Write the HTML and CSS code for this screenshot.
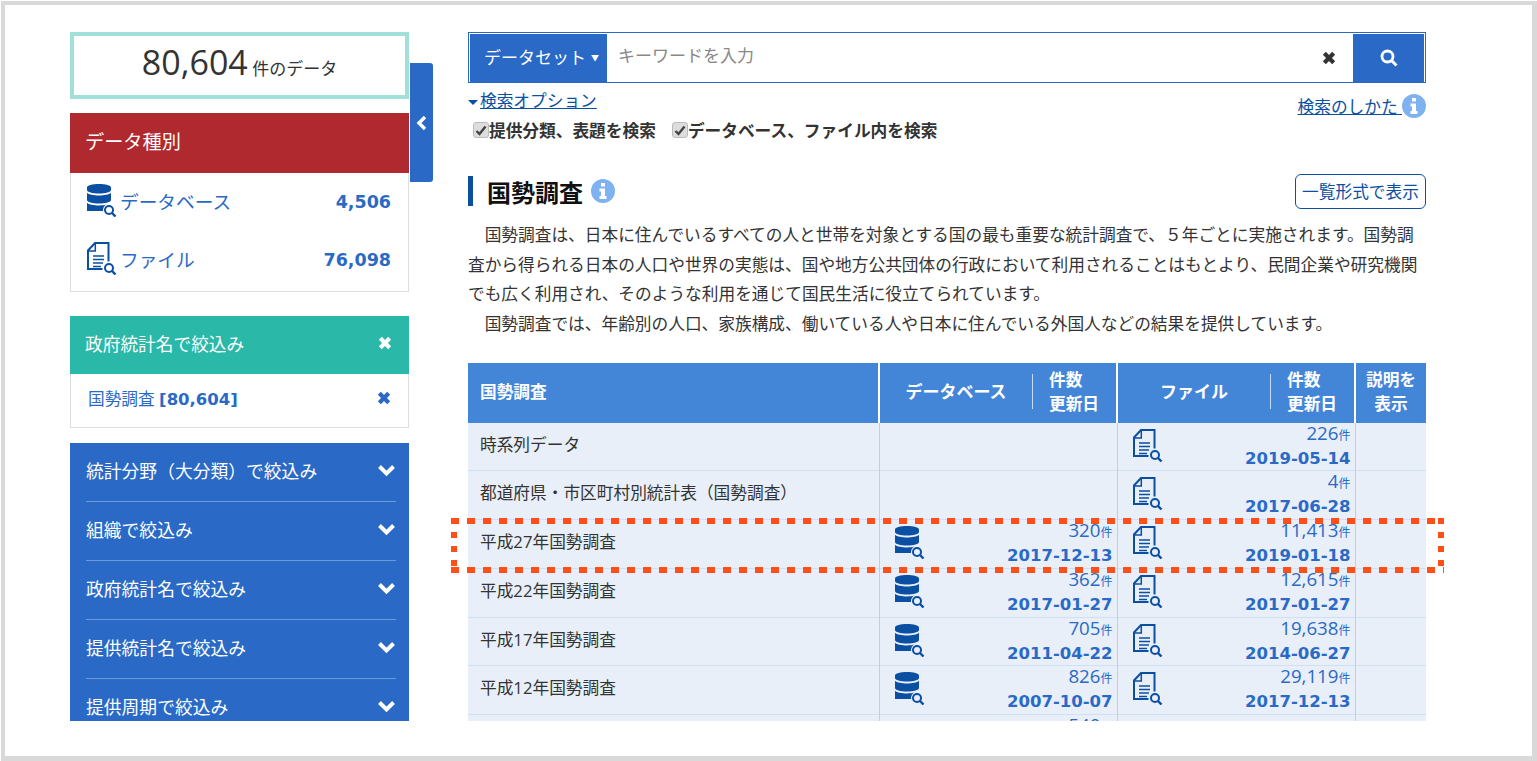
FILE: index.html
```html
<!DOCTYPE html>
<html lang="ja">
<head>
    <meta charset="UTF-8">
    <title>国勢調査</title>
    <link rel="stylesheet" href="styles.css">
</head>
<body>
    <svg class="sprite" width="0" height="0">
        <symbol id="ico-db" viewBox="0 0 30 33">
            <path fill="#0b4fa3" d="M0 3.500C0 1.300 5.500 0 12 0s12 1.300 12 3.500v2.500c0 2.200-5.500 3.500-12 3.500S0 8.200 0 6zM0 8.800c2 1.900 7 2.700 12 2.700s10-.8 12-2.700V16c0 2.200-5.500 3.500-12 3.500S0 18.200 0 16zM0 18.800c2 1.900 7 2.700 12 2.700 3 0 5.500-.3 7.300-.9a7 7 0 0 0-3.300 6.400H0z"/>
            <circle cx="22" cy="26" r="4" fill="none" stroke="#0b4fa3" stroke-width="2"/>
            <path d="M25 29l3.500 3.500" stroke="#0b4fa3" stroke-width="2.400" fill="none"/>
        </symbol>
        <symbol id="ico-file" viewBox="0 0 30 33">
            <path fill="none" stroke="#0b4fa3" stroke-width="2" d="M21.500 19.500V1H8L1 8.500V27h14.500"/>
            <path fill="none" stroke="#0b4fa3" stroke-width="1.500" d="M8.300 1.500V9H1.500"/>
            <path stroke="#0b4fa3" stroke-width="1.500" fill="none" d="M6 14h11M6 17.500h11M6 21h10M6 24.500h8"/>
            <circle cx="22" cy="26" r="4" fill="none" stroke="#0b4fa3" stroke-width="2"/>
            <path d="M25 29l3.500 3.500" stroke="#0b4fa3" stroke-width="2.400" fill="none"/>
        </symbol>
        <symbol id="ico-x" viewBox="1 1 12 12">
            <path d="M3 3l8 8M11 3l-8 8" stroke="currentColor" stroke-width="3.600" fill="none"/>
        </symbol>
        <symbol id="ico-down" viewBox="0 0 16 12">
            <path d="M2 3l6 6 6-6" stroke="currentColor" stroke-width="3.400" fill="none"/>
        </symbol>
        <symbol id="ico-info" viewBox="0 0 24 24">
            <circle cx="12" cy="12" r="12" fill="#7fb2f0"/>
            <path fill="#fff" d="M10 4h4v3.500h-4zM8.500 9.500H14V17h1.500v3h-7v-3H10v-4.500H8.500z"/>
        </symbol>
    </svg>

    <div class="frame">
        <div class="page">
            <aside class="side">
                <div class="total"><span class="total-num">80,604</span> 件のデータ</div>

                <div class="panel-head head-red">データ種別</div>
                <div class="panel-body type-list">
                    <a class="type-row"><svg class="type-ico"><use href="#ico-db"/></svg><span class="type-name">データベース</span><b class="type-num">4,506</b></a>
                    <a class="type-row"><svg class="type-ico"><use href="#ico-file"/></svg><span class="type-name">ファイル</span><b class="type-num">76,098</b></a>
                </div>

                <div class="panel-head head-teal">政府統計名で絞込み<svg class="ico-x"><use href="#ico-x"/></svg></div>
                <div class="panel-body picked">
                    <span>国勢調査 <b class="picked-num">[80,604]</b></span>
                    <svg class="ico-x"><use href="#ico-x"/></svg>
                </div>

                <div class="filters">
                    <div class="filter">統計分野（大分類）で絞込み<svg class="ico-down"><use href="#ico-down"/></svg></div>
                    <div class="filter">組織で絞込み<svg class="ico-down"><use href="#ico-down"/></svg></div>
                    <div class="filter">政府統計名で絞込み<svg class="ico-down"><use href="#ico-down"/></svg></div>
                    <div class="filter">提供統計名で絞込み<svg class="ico-down"><use href="#ico-down"/></svg></div>
                    <div class="filter">提供周期で絞込み<svg class="ico-down"><use href="#ico-down"/></svg></div>
                </div>
            </aside>

            <div class="side-toggle">
                <svg class="toggle-ico" viewBox="0 0 12 16"><path d="M9 2L3 8l6 6" stroke="#fff" stroke-width="3.400" fill="none"/></svg>
            </div>

            <main class="main">
                <form class="search">
                    <div class="search-type">データセット<span class="caret">▼</span></div>
                    <input class="search-input" type="text" placeholder="キーワードを入力">
                    <svg class="search-clear"><use href="#ico-x"/></svg>
                    <div class="search-btn">
                        <svg width="18" height="18" viewBox="0 0 18 18"><circle cx="7.500" cy="7.500" r="5.500" fill="none" stroke="#fff" stroke-width="2.800"/><path d="M11.500 11.500l5 5" stroke="#fff" stroke-width="3"/></svg>
                    </div>
                </form>

                <div class="options">
                    <div>
                        <a class="opt-link"><span class="opt-caret"></span>検索オプション</a>
                        <div class="checks">
                            <label class="check"><span class="box"><svg width="12" height="11" viewBox="0 0 12 11"><path d="M1.500 6l3 3 6-7.500" stroke="#444" stroke-width="2.400" fill="none"/></svg></span>提供分類、表題を検索</label>
                            <label class="check"><span class="box"><svg width="12" height="11" viewBox="0 0 12 11"><path d="M1.500 6l3 3 6-7.500" stroke="#444" stroke-width="2.400" fill="none"/></svg></span>データベース、ファイル内を検索</label>
                        </div>
                    </div>
                    <a class="howto"><span class="howto-text">検索のしかた </span><svg class="info-big"><use href="#ico-info"/></svg></a>
                </div>

                <div class="title-row">
                    <h1 class="title">国勢調査<svg class="info-big"><use href="#ico-info"/></svg></h1>
                    <a class="list-btn">一覧形式で表示</a>
                </div>

                <p class="lead">　国勢調査は、日本に住んでいるすべての人と世帯を対象とする国の最も重要な統計調査で、５年ごとに実施されます。国勢調<br>査から得られる日本の人口や世界の実態は、国や地方公共団体の行政において利用されることはもとより、民間企業や研究機関<br>でも広く利用され、そのような利用を通じて国民生活に役立てられています。<br>　国勢調査では、年齢別の人口、家族構成、働いている人や日本に住んでいる外国人などの結果を提供しています。</p>

                <table class="stats">
                    <colgroup>
                        <col class="col-name"><col class="col-data"><col class="col-data"><col class="col-desc">
                    </colgroup>
                    <thead>
                        <tr>
                            <th class="th-name">国勢調査</th>
                            <th><div class="th-split"><span class="th-main">データベース</span><span class="th-sub">件数<br>更新日</span></div></th>
                            <th><div class="th-split"><span class="th-main">ファイル</span><span class="th-sub">件数<br>更新日</span></div></th>
                            <th class="th-desc">説明を<br>表示</th>
                        </tr>
                    </thead>
                    <tbody>
                        <tr>
                            <td class="name">時系列データ</td>
                            <td></td>
                            <td><div class="cell"><svg class="cell-ico"><use href="#ico-file"/></svg><div class="nums"><div class="count">226<small>件</small></div><div class="date">2019-05-14</div></div></div></td>
                            <td></td>
                        </tr>
                        <tr>
                            <td class="name">都道府県・市区町村別統計表（国勢調査）</td>
                            <td></td>
                            <td><div class="cell"><svg class="cell-ico"><use href="#ico-file"/></svg><div class="nums"><div class="count">4<small>件</small></div><div class="date">2017-06-28</div></div></div></td>
                            <td></td>
                        </tr>
                        <tr>
                            <td class="name">平成27年国勢調査</td>
                            <td><div class="cell"><svg class="cell-ico"><use href="#ico-db"/></svg><div class="nums"><div class="count">320<small>件</small></div><div class="date">2017-12-13</div></div></div></td>
                            <td><div class="cell"><svg class="cell-ico"><use href="#ico-file"/></svg><div class="nums"><div class="count">11,413<small>件</small></div><div class="date">2019-01-18</div></div></div></td>
                            <td></td>
                        </tr>
                        <tr>
                            <td class="name">平成22年国勢調査</td>
                            <td><div class="cell"><svg class="cell-ico"><use href="#ico-db"/></svg><div class="nums"><div class="count">362<small>件</small></div><div class="date">2017-01-27</div></div></div></td>
                            <td><div class="cell"><svg class="cell-ico"><use href="#ico-file"/></svg><div class="nums"><div class="count">12,615<small>件</small></div><div class="date">2017-01-27</div></div></div></td>
                            <td></td>
                        </tr>
                        <tr>
                            <td class="name">平成17年国勢調査</td>
                            <td><div class="cell"><svg class="cell-ico"><use href="#ico-db"/></svg><div class="nums"><div class="count">705<small>件</small></div><div class="date">2011-04-22</div></div></div></td>
                            <td><div class="cell"><svg class="cell-ico"><use href="#ico-file"/></svg><div class="nums"><div class="count">19,638<small>件</small></div><div class="date">2014-06-27</div></div></div></td>
                            <td></td>
                        </tr>
                        <tr>
                            <td class="name">平成12年国勢調査</td>
                            <td><div class="cell"><svg class="cell-ico"><use href="#ico-db"/></svg><div class="nums"><div class="count">826<small>件</small></div><div class="date">2007-10-07</div></div></div></td>
                            <td><div class="cell"><svg class="cell-ico"><use href="#ico-file"/></svg><div class="nums"><div class="count">29,119<small>件</small></div><div class="date">2017-12-13</div></div></div></td>
                            <td></td>
                        </tr>
                        <tr>
                            <td class="name"></td>
                            <td><div class="cell"><div class="nums"><div class="count">540<small>件</small></div></div></div></td>
                            <td></td>
                            <td></td>
                        </tr>
                    </tbody>
                </table>
            </main>
        </div>

        <div class="highlight"></div>
    </div>
</body>
</html>
```

FILE: styles.css
```css
html, body {
    margin: 0;
    height: 100%;
    overflow: hidden;
    background: #fff;
}
body {
    font-family: "Open Sans", "Noto Sans CJK JP", sans-serif;
    font-size: 16.700px;
    color: #333;
}
.sprite {
    position: absolute;
}
a {
    color: inherit;
}

/* frame */
.frame {
    position: relative;
    box-sizing: border-box;
    margin: 1px 0 0 1px;
    width: 1536px;
    height: 760px;
    border: 4px solid #d9d9d9;
    border-width: 4px 5px 5px 4px;
    background: #fff;
}
.page {
    display: flex;
    align-items: flex-start;
    box-sizing: border-box;
    height: 716px;
    padding: 27px 0 0 65px;
    overflow: hidden;
}
.highlight {
    position: absolute;
    left: 446px;
    top: 513px;
    width: 993px;
    height: 55px;
    background:
        repeating-linear-gradient(90deg, #ff4f19 0 8px, transparent 8px 16px) left top / 100% 6px no-repeat,
        repeating-linear-gradient(90deg, #ff4f19 0 8px, transparent 8px 16px) left bottom / 100% 6px no-repeat,
        repeating-linear-gradient(180deg, #ff4f19 0 6px, transparent 6px 14px) left top / 6px 100% no-repeat,
        repeating-linear-gradient(180deg, #ff4f19 0 6px, transparent 6px 14px) right top / 6px 100% no-repeat;
}

/* sidebar */
.side {
    flex: none;
    width: 339px;
}
.total {
    box-sizing: border-box;
    height: 67px;
    border: 4px solid #a0e0d8;
    text-align: center;
    line-height: 52px;
    font-size: 17px;
    margin-bottom: 14px;
}
.total-num {
    font-size: 34px;
}
.panel-head {
    display: flex;
    align-items: center;
    justify-content: space-between;
    box-sizing: border-box;
    padding: 0 17px 5px 15px;
    color: #fff;
}
.head-red {
    height: 60px;
    background: #b0292e;
    font-size: 19.200px;
}
.head-teal {
    height: 58px;
    background: #2ab8a8;
    font-size: 17.700px;
}
.panel-body {
    border: 1px solid #ddd;
    border-top: 0;
    color: #2a6ac6;
}
.type-list {
    height: 119px;
    padding: 0 17px 0 16px;
    box-sizing: border-box;
    margin-bottom: 24px;
}
.type-row {
    display: flex;
    align-items: center;
    box-sizing: border-box;
    height: 58px;
    padding-bottom: 4px;
}
.type-ico {
    width: 30px;
    height: 33px;
    margin-right: 3px;
}
.type-name {
    flex: 1;
    font-size: 18.700px;
}
.type-num {
    font-family: "DejaVu Sans", sans-serif;
    font-size: 17.500px;
    margin-top: 4px;
}
.picked {
    display: flex;
    align-items: center;
    justify-content: space-between;
    box-sizing: border-box;
    height: 54px;
    padding: 0 17px 5px 17px;
    margin-bottom: 15px;
}
.picked-num {
    font-family: "DejaVu Sans", sans-serif;
    font-size: 16.500px;
}
.ico-x {
    width: 14px;
    height: 14px;
}
.filters {
    background: #2a6ac6;
    color: #fff;
    padding: 0 13px 0 16px;
    height: 300px;
}
.filter {
    display: flex;
    align-items: center;
    justify-content: space-between;
    box-sizing: border-box;
    height: 59px;
    padding-bottom: 5px;
    border-bottom: 1px solid #6d9adb;
    font-size: 17.800px;
}
.filter:last-child {
    border-bottom: 0;
}
.ico-down {
    width: 19px;
    height: 14px;
}
.side-toggle {
    flex: none;
    display: flex;
    align-items: center;
    justify-content: center;
    width: 23px;
    height: 119px;
    margin: 31px 0 0 1px;
    background: #2a6ac6;
    border-radius: 0 3px 3px 0;
}
.toggle-ico {
    width: 12px;
    height: 16px;
}

/* main column */
.main {
    flex: none;
    width: 958px;
    margin-left: 35px;
}
.search {
    display: flex;
    align-items: center;
    box-sizing: border-box;
    height: 51px;
    padding: 1px;
    border: 1px solid #2a6ac6;
}
.search-type {
    display: flex;
    align-items: center;
    justify-content: flex-end;
    box-sizing: border-box;
    width: 137px;
    height: 48px;
    padding: 0 8px 3px 0;
    background: #2a6ac6;
    color: #fff;
    font-size: 17px;
}
.caret {
    font-size: 8px;
    margin: 3px 0 0 5px;
}
.search-input {
    flex: 1;
    box-sizing: border-box;
    border: 0;
    outline: 0;
    height: 46px;
    padding: 0 11px 4px;
    font: inherit;
    font-size: 17px;
    background: transparent;
}
.search-input::placeholder {
    color: #888;
    opacity: 1;
}
.search-clear {
    width: 14px;
    height: 14px;
    margin-right: 17px;
    color: #333;
}
.search-btn {
    display: flex;
    align-items: center;
    justify-content: center;
    width: 71px;
    height: 48px;
    background: #2a6ac6;
}
.options {
    display: flex;
    justify-content: space-between;
}
.opt-link {
    display: block;
    height: 22px;
    margin-top: 6px;
    line-height: 24px;
    color: #0b4fa3;
    text-decoration: underline;
}
.opt-caret {
    display: inline-block;
    vertical-align: 2px;
    margin-right: 2px;
    border: 5px solid transparent;
    border-top-color: #0b4fa3;
    border-bottom: 0;
}
.checks {
    display: flex;
    gap: 16px;
    margin: 8px 0 0 5px;
}
.check {
    display: flex;
    align-items: center;
    height: 22px;
    font-weight: 700;
}
.box {
    display: flex;
    align-items: center;
    justify-content: center;
    box-sizing: border-box;
    width: 16px;
    height: 16px;
    background: #ddd;
    border: 1px solid #bbb;
    border-radius: 3px;
}
.howto {
    display: flex;
    align-items: center;
    height: 24px;
    margin-top: 11px;
    color: #0b4fa3;
}
.howto-text {
    text-decoration: underline;
    white-space: pre;
}
.info-big {
    width: 24px;
    height: 24px;
}
.title-row {
    display: flex;
    align-items: center;
    justify-content: space-between;
    height: 36px;
    margin-top: 32px;
}
.title {
    display: flex;
    align-items: center;
    gap: 8px;
    height: 30px;
    margin: 0;
    padding-left: 14px;
    border-left: 5px solid #0b4fa3;
    font-size: 24px;
    color: #111;
}
.list-btn {
    box-sizing: border-box;
    width: 131px;
    height: 35px;
    line-height: 33px;
    text-align: center;
    border: 1px solid #0b4fa3;
    border-radius: 6px;
    color: #0b4fa3;
}
.lead {
    margin: 11px 0 25px;
    line-height: 29.500px;
    white-space: nowrap;
}

/* table */
.stats {
    table-layout: fixed;
    width: 958px;
    border-collapse: collapse;
}
.col-name { width: 411px; }
.col-data { width: 238px; }
.col-desc { width: 71px; }
.stats th {
    box-sizing: border-box;
    height: 60px;
    padding: 0 0 3px;
    background: #4385d7;
    color: #fff;
    font-size: 16.700px;
    line-height: 24px;
    border-left: 2px solid #fff;
}
.stats th:first-child {
    border-left: 0;
}
.stats .th-name {
    text-align: left;
    padding-left: 12px;
}
.th-split {
    display: flex;
    align-items: center;
}
.th-main {
    flex: 1;
    font-size: 17px;
    line-height: 35px;
    border-right: 1px solid #c6dbf4;
    height: 35px;
}
.th-sub {
    box-sizing: border-box;
    width: 83px;
    padding-left: 16px;
    text-align: left;
}
.stats td {
    height: 48px;
    padding: 0;
    background: #e8eff8;
    border-top: 1px solid #d0e0f4;
    border-left: 1px solid #ccc;
    vertical-align: top;
}
.stats tbody tr:first-child td {
    height: 47px;
    border-top: 0;
}
.stats tbody tr:nth-child(5) td {
    height: 47px;
}
.stats td.name {
    padding: 9px 0 0 12px;
    box-sizing: border-box;
    border-left: 0;
}
.cell {
    display: flex;
    justify-content: space-between;
    height: 47px;
    padding: 0 4px 0 15px;
}
.cell-ico {
    width: 30px;
    height: 33px;
    margin-top: 6px;
}
.nums {
    margin-left: auto;
    text-align: right;
    color: #2a6ac6;
}
.count {
    height: 23px;
    margin-top: -2px;
    line-height: 24px;
    font-size: 18.700px;
}
.count small {
    font-size: 12px;
}
.date {
    height: 26px;
    line-height: 29px;
    font-family: "DejaVu Sans", sans-serif;
    font-weight: 700;
    font-size: 16.500px;
}
```
